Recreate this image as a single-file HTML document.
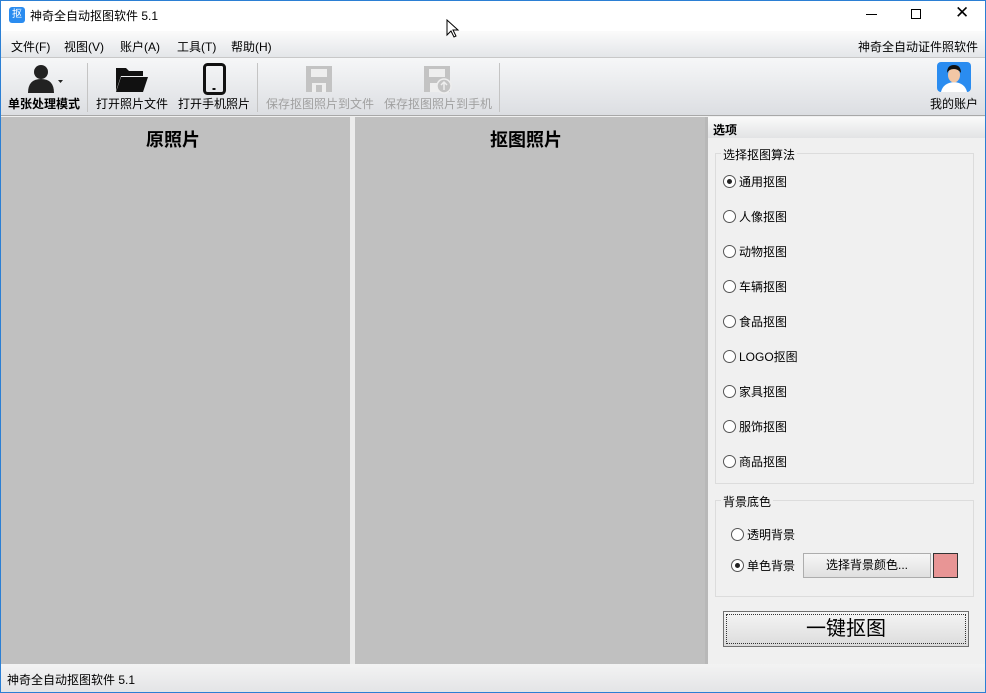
<!DOCTYPE html><html><head><meta charset="utf-8"><style>
*{margin:0;padding:0;box-sizing:border-box}
body{width:986px;height:693px;overflow:hidden;font-family:"Liberation Sans","Noto Sans CJK SC",sans-serif;font-size:12px;color:#000;background:#f0f0f0;position:relative}
.a{position:absolute}
.frame{left:0;top:0;width:986px;height:693px;border:1px solid #2b7fd4;z-index:10;pointer-events:none}
.title{left:0;top:0;width:986px;height:31px;background:#fff}
.menu{left:0;top:31px;width:986px;height:27px;background:linear-gradient(#fbfbfb,#e4e6e9);border-bottom:1px solid #c8c8c8}
.tool{left:0;top:58px;width:986px;height:58px;background:linear-gradient(#f6f7f8,#dcdee2);border-bottom:1px solid #a8a8a8}
.sep{top:63px;width:1px;height:49px;background:#c4c4c4}
.tl{top:95px;font-size:12px;white-space:nowrap}
.radio{width:13px;height:13px;border:1px solid #555;border-radius:50%;background:#fff}
.dot{position:absolute;left:3px;top:3px;width:5px;height:5px;border-radius:50%;background:#222}
.gb{border:1px solid #dcdcdc}
.gt{background:#f0f0f0;padding:0 2px;font-size:12px}
</style></head><body>
<div class="a frame"></div>
<div class="a title">
 <div class="a" style="left:9px;top:7px;width:16px;height:16px;background:#2a8cf0;border-radius:3px;color:#fff;font-size:10px;line-height:16px;text-align:center">抠</div>
 <div class="a" style="left:30px;top:7px;font-size:12px">神奇全自动抠图软件 5.1</div>
 <div class="a" style="left:866px;top:14px;width:11px;height:1px;background:#000"></div>
 <div class="a" style="left:911px;top:9px;width:10px;height:10px;border:1px solid #000"></div>
 <div class="a" style="left:955px;top:3px;font-size:17px;font-weight:300">✕</div>
</div>
<div class="a menu">
 <span class="a" style="left:11px;top:7px">文件(F)</span>
 <span class="a" style="left:64px;top:7px">视图(V)</span>
 <span class="a" style="left:120px;top:7px">账户(A)</span>
 <span class="a" style="left:177px;top:7px">工具(T)</span>
 <span class="a" style="left:231px;top:7px">帮助(H)</span>
 <span class="a" style="left:858px;top:7px">神奇全自动证件照软件</span>
</div>
<div class="a tool">
 <svg class="a" style="left:27px;top:5px" width="40" height="32"><circle cx="14" cy="9" r="7" fill="#222"/><path d="M1 30 Q1 16 14 16 Q27 16 27 30Z" fill="#222"/><path d="M31 17 l5 0 l-2.5 3z" fill="#222"/></svg>
 <div class="a tl" style="left:8px;top:37px;font-weight:bold">单张处理模式</div>
 <div class="a sep" style="left:87px;top:5px"></div>
 <svg class="a" style="left:115px;top:7px" width="34" height="28"><path d="M1 3h10l3 3h14v5H6L1 26Z" fill="#111"/><path d="M6 12h27l-5 15H1Z" fill="#111"/></svg>
 <div class="a tl" style="left:96px;top:37px">打开照片文件</div>
 <svg class="a" style="left:203px;top:5px" width="24" height="32"><rect x="1.5" y="1.5" width="20" height="29" rx="3" fill="none" stroke="#111" stroke-width="3"/><rect x="9.5" y="25" width="3" height="2" fill="#111"/></svg>
 <div class="a tl" style="left:178px;top:37px">打开手机照片</div>
 <div class="a sep" style="left:257px;top:5px"></div>
 <svg class="a" style="left:306px;top:8px" width="28" height="26"><path d="M0 0h26v26H0Z" fill="#c3c3c3"/><rect x="5" y="3" width="16" height="8" fill="#eee"/><rect x="6" y="17" width="14" height="9" fill="#eee"/><rect x="10" y="19" width="6" height="7" fill="#c3c3c3"/></svg>
 <div class="a tl" style="left:266px;top:37px;color:#a0a0a0">保存抠图照片到文件</div>
 <svg class="a" style="left:424px;top:8px" width="30" height="28"><path d="M0 0h26v26H0Z" fill="#c3c3c3"/><rect x="5" y="3" width="16" height="8" fill="#eee"/><rect x="6" y="17" width="14" height="9" fill="#eee"/><circle cx="20" cy="20" r="7" fill="#c3c3c3" stroke="#eee" stroke-width="1.5"/><path d="M20 24v-7M17 19l3-3 3 3" stroke="#eee" stroke-width="1.5" fill="none"/></svg>
 <div class="a tl" style="left:384px;top:37px;color:#a0a0a0">保存抠图照片到手机</div>
 <div class="a sep" style="left:499px;top:5px"></div>
 <svg class="a" style="left:937px;top:4px" width="34" height="30"><rect width="34" height="30" rx="4" fill="#2a8cf0"/><path d="M4 30 Q6 21 17 20 Q28 21 30 30Z" fill="#fff"/><ellipse cx="17" cy="13" rx="6" ry="7.5" fill="#f2c7a5"/><path d="M10 11 Q10 3 17 3 Q24 3 24 11 Q21 7 17 7 Q12 7 10 11Z" fill="#111"/></svg>
 <div class="a tl" style="left:930px;top:37px">我的账户</div>
</div>
<div class="a" style="left:1px;top:117px;width:349px;height:547px;background:#c0c0c0"></div>
<div class="a" style="left:350px;top:117px;width:5px;height:547px;background:#ececec"></div>
<div class="a" style="left:355px;top:117px;width:350px;height:547px;background:#c0c0c0"></div>
<div class="a" style="left:146px;top:126px;font-size:18px;font-weight:bold">原照片</div>
<div class="a" style="left:490px;top:126px;font-size:18px;font-weight:bold">抠图照片</div>
<div class="a" style="left:705px;top:117px;width:3px;height:547px;background:#b8b8b8"></div>
<div class="a" style="left:708px;top:117px;width:277px;height:21px;background:linear-gradient(#fafafa,#e2e3e5)"></div>
<div class="a" style="left:713px;top:121px;font-weight:bold;font-size:12px">选项</div>
<div class="a gb" style="left:715px;top:153px;width:259px;height:331px"></div>
<div class="a gt" style="left:721px;top:146px">选择抠图算法</div>
<div class="a" style="left:723px;top:174px">
 <div class="a radio" style="top:1px"><div class="dot"></div></div><span class="a" style="left:16px;top:-1px;white-space:nowrap">通用抠图</span>
 <div class="a radio" style="top:36px"></div><span class="a" style="left:16px;top:34px;white-space:nowrap">人像抠图</span>
 <div class="a radio" style="top:71px"></div><span class="a" style="left:16px;top:69px;white-space:nowrap">动物抠图</span>
 <div class="a radio" style="top:106px"></div><span class="a" style="left:16px;top:104px;white-space:nowrap">车辆抠图</span>
 <div class="a radio" style="top:141px"></div><span class="a" style="left:16px;top:139px;white-space:nowrap">食品抠图</span>
 <div class="a radio" style="top:176px"></div><span class="a" style="left:16px;top:174px;white-space:nowrap">LOGO抠图</span>
 <div class="a radio" style="top:211px"></div><span class="a" style="left:16px;top:209px;white-space:nowrap">家具抠图</span>
 <div class="a radio" style="top:246px"></div><span class="a" style="left:16px;top:244px;white-space:nowrap">服饰抠图</span>
 <div class="a radio" style="top:281px"></div><span class="a" style="left:16px;top:279px;white-space:nowrap">商品抠图</span>
</div>
<div class="a gb" style="left:715px;top:500px;width:259px;height:97px"></div>
<div class="a gt" style="left:721px;top:493px">背景底色</div>
<div class="a radio" style="left:731px;top:528px"></div><span class="a" style="left:747px;top:526px">透明背景</span>
<div class="a radio" style="left:731px;top:559px"><div class="dot"></div></div><span class="a" style="left:747px;top:557px">单色背景</span>
<div class="a" style="left:803px;top:553px;width:128px;height:25px;border:1px solid #adadad;background:linear-gradient(#f6f6f6,#e0e0e0);text-align:center;line-height:23px">选择背景颜色...</div>
<div class="a" style="left:933px;top:553px;width:25px;height:25px;border:1px solid #333;background:#e89595"></div>
<div class="a" style="left:723px;top:611px;width:246px;height:36px;border:1px solid #707070;background:linear-gradient(#f5f5f5,#dcdcdc);text-align:center;line-height:34px;font-size:20px"><div class="a" style="left:2px;top:2px;right:2px;bottom:2px;border:1px dotted #333"></div>一键抠图</div>
<div class="a" style="left:0;top:664px;width:986px;height:29px;background:linear-gradient(#f3f3f3,#e3e4e6)"></div>
<div class="a" style="left:7px;top:671px">神奇全自动抠图软件 5.1</div>
<svg class="a" style="left:446px;top:19px" width="14" height="20"><path d="M1 1v15l4-4 3 6 2-1-3-6h5Z" fill="#fff" stroke="#000"/></svg>
</body></html>
